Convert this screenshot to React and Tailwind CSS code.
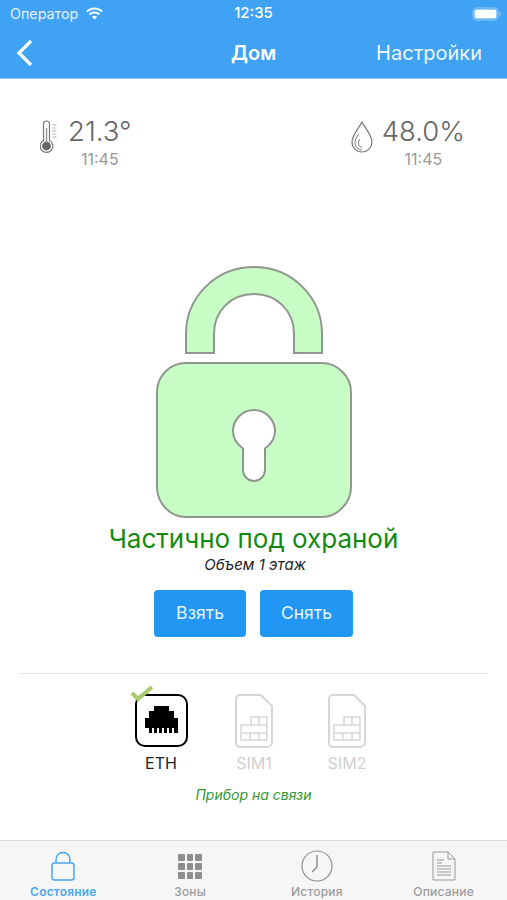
import React from "react";

function Wifi() {
  return (
    <svg width="19" height="14" viewBox="0 0 19 14" fill="#fff">
      <path d="M9.500 2.600c2.700 0 5.100 1 7 2.700l1.300-1.400C15.600 1.900 12.700.6 9.500.6S3.400 1.900 1.200 3.900l1.300 1.400c1.900-1.700 4.300-2.700 7-2.700z" />
      <path d="M9.500 6.600c1.600 0 3 .6 4.200 1.600l1.400-1.400C13.600 5.400 11.600 4.600 9.500 4.600s-4.100.8-5.600 2.200l1.400 1.400c1.200-1 2.600-1.600 4.200-1.600z" />
      <path d="M9.500 8.700c-1 0-1.900.4-2.600 1l2.600 2.800 2.600-2.800c-.7-.6-1.600-1-2.600-1z" />
    </svg>
  );
}

function Battery() {
  return (
    <svg width="30" height="14" viewBox="0 0 30 14">
      <rect x="1" y="1" width="25" height="12" rx="3.500" fill="none" stroke="#fff" strokeOpacity="0.45" />
      <rect x="2.500" y="2.500" width="22" height="9" rx="2" fill="#fff" />
      <path d="M27.500 5v4c.8-.3 1.300-1.100 1.300-2s-.5-1.700-1.300-2z" fill="#fff" fillOpacity="0.5" />
    </svg>
  );
}

function Thermo() {
  return (
    <svg width="18" height="33" viewBox="0 0 18 33" fill="none">
      <path d="M3.500 20.500V4a3 3 0 0 1 6 0v16.500a6.300 6.300 0 1 1-6 0z" stroke="#777" strokeWidth="1.200" fill="#fff" />
      <circle cx="6.500" cy="26" r="4.400" fill="#666" />
      <rect x="5.800" y="8" width="1.500" height="15" fill="#999" />
      <path d="M12.500 5h4M12.500 8h3M12.500 11h4M12.500 14h3M12.500 17h4" stroke="#aaa" strokeWidth="1" />
    </svg>
  );
}

function Drop() {
  return (
    <svg width="24" height="34" viewBox="0 0 24 34" fill="none" stroke="#777">
      <path d="M12 2c3 6 10 13 10 20a10 10 0 0 1-20 0C2 15 9 8 12 2z" strokeWidth="1.200" />
      <path d="M9 14c-2.500 3-4 5.500-4 8.500 0 4 3 7 7 7.500" strokeWidth="1" />
      <path d="M10 19c-1 1.300-1.700 2.500-1.700 4 0 2.300 1.700 4 3.700 4.500" strokeWidth="1" />
    </svg>
  );
}

function BigLock() {
  return (
    <svg width="196" height="252" viewBox="0 0 196 252" fill="#c8fdc5" stroke="#8f978f" strokeWidth="2">
      <path fillRule="evenodd" d="M30 87V68C30 31 60 1 98 1s68 30 68 67v19h-28V68c0-23-17-40-40-40S58 45 58 68v19z" />
      <path fillRule="evenodd" d="M30 97h136c15 0 29 13 29 29v95c0 16-14 30-29 30H30C14 251 1 237 1 221V126c0-16 13-29 29-29zM98 144c-11.500 0-21 9.500-21 21 0 7 3 12.500 10 17.500v21.500c0 6 5 11 11 11s11-5 11-11v-21.500c7-5 10-10.500 10-17.500 0-11.500-9.500-21-21-21z" />
    </svg>
  );
}

function EthIcon() {
  return (
    <div className="relative w-[53px] h-[53px] rounded-[10px] border-2 border-black flex items-center justify-center">
      <svg className="mb-[3px]" width="33" height="27" viewBox="0 0 33 27" fill="#000">
        <path d="M9 0h15v5h5v7h4v15h-4v-5h-2v5h-3v-5h-2v5h-3v-5h-2v5h-3v-5h-2v5H9v-5H7v5H4v-5H0V12h4V5h5z" />
      </svg>
      <svg className="absolute -top-[11px] -left-[7px]" width="24" height="18" viewBox="0 0 24 18" fill="none">
        <path d="M2 8l6 6L22 2" stroke="#aacb6b" strokeWidth="4" />
      </svg>
    </div>
  );
}

function SimIcon() {
  return (
    <svg width="38" height="54" viewBox="0 0 38 54" fill="none" stroke="#d6d6d6" strokeWidth="2">
      <path d="M5 1h21l11 11v36a5 5 0 0 1-5 5H5a4 4 0 0 1-4-4V5a4 4 0 0 1 4-4z" />
      <path d="M6 31h10v-8h16v23H6z" strokeWidth="1.500" />
      <path d="M6 39h26M16 31h16M24 23v8M15 39v7M24 39v7" strokeWidth="1.500" />
    </svg>
  );
}

function Tab({ icon, label, active }) {
  return (
    <div className="flex-1 flex flex-col items-center pt-[7px]">
      <div className="h-[36px] flex items-center justify-center">{icon}</div>
      <div className={`text-[12px] leading-[14px] mt-[1px] font-medium tracking-[0.2px] ${active ? "text-[#4ba6ef] font-semibold" : "text-[#9a9a9a]"}`}>
        {label}
      </div>
    </div>
  );
}

function Grid() {
  const cells = Array.from({ length: 9 });
  return (
    <div className="grid grid-cols-3 gap-[2px] w-[24px]">
      {cells.map((_, i) => (
        <div key={i} className="h-[7px] bg-[#8e8e8e] rounded-[1px]" />
      ))}
    </div>
  );
}

export default function App() {
  return (
    <div className="w-[507px] h-[900px] bg-white flex flex-col overflow-hidden" style={{ fontFamily: "Inter, 'Noto Sans', sans-serif" }}>
      <header className="h-[79px] bg-[#3fa2f3] text-white shrink-0 border-b border-[#8ccbf8]">
        <div className="h-[27px] px-[10px] flex items-center justify-between relative">
          <div className="flex items-center gap-[7px] text-[14.300px] text-[#e4f1fd] pt-[1px]">
            <span>Оператор</span>
            <Wifi />
          </div>
          <span className="absolute left-0 right-0 text-center text-[15px] font-medium">12:35</span>
          <div className="mr-[-5px]"><Battery /></div>
        </div>
        <div className="h-[51px] flex items-center justify-between pl-[16px] pr-[25px] relative">
          <svg width="18" height="28" viewBox="0 0 18 28" fill="none">
            <path d="M15 2L3 14l12 12" stroke="#fff" strokeWidth="3.200" />
          </svg>
          <span className="absolute left-0 right-0 text-center text-[20px] font-semibold">Дом</span>
          <span className="text-[20px] text-[#eef7fe]">Настройки</span>
        </div>
      </header>

      <main className="flex-1 flex flex-col items-center">
        <div className="w-full flex justify-between pl-[40px] pr-[42px] pt-[36px] text-[#666]">
          <div className="flex items-start gap-[10px]">
            <div className="pt-[5px]"><Thermo /></div>
            <div className="flex flex-col items-center">
              <span className="text-[27.500px] leading-[32px] font-light">21.3°</span>
              <span className="text-[16px] leading-[18px] mt-[3px] text-[#999]">11:45</span>
            </div>
          </div>
          <div className="flex items-start gap-[8px]">
            <div className="pt-[5px]"><Drop /></div>
            <div className="flex flex-col items-center">
              <span className="text-[27.500px] leading-[32px] font-light">48.0%</span>
              <span className="text-[16px] leading-[18px] mt-[3px] text-[#999]">11:45</span>
            </div>
          </div>
        </div>

        <div className="mt-[98px]"><BigLock /></div>

        <div className="text-[26px] leading-[32px] mt-[5px] text-[#128a12]">Частично под охраной</div>
        <div className="text-[15px] leading-[18px] mt-[1px] ml-[3px] italic text-[#222]">Объем 1 этаж</div>

        <div className="flex gap-[14px] mt-[16px]">
          <button className="w-[92px] h-[47px] rounded-[4px] bg-[#2296f3] text-[#e8f4fe] text-[17.500px]">Взять</button>
          <button className="w-[93px] h-[47px] rounded-[4px] bg-[#2296f3] text-[#e8f4fe] text-[17.500px]">Снять</button>
        </div>

        <div className="w-[468px] border-t border-[#e6e6e6] mt-[36px]" />

        <div className="flex gap-[40px] mt-[20px] w-full justify-center pl-[1px]">
          <div className="w-[53px] flex flex-col items-center">
            <EthIcon />
            <span className="text-[16px] leading-[18px] mt-[7px] text-[#222]">ETH</span>
          </div>
          <div className="w-[53px] flex flex-col items-center">
            <SimIcon />
            <span className="text-[16px] leading-[18px] mt-[6px] text-[#d0d0d0]">SIM1</span>
          </div>
          <div className="w-[53px] flex flex-col items-center">
            <SimIcon />
            <span className="text-[16px] leading-[18px] mt-[6px] text-[#d0d0d0]">SIM2</span>
          </div>
        </div>

        <div className="text-[14px] leading-[16px] italic text-[#2f9a2f] mt-[15px]">Прибор на связи</div>
      </main>

      <nav className="h-[60px] shrink-0 bg-[#f7f6f7] border-t border-[#dcdcdc] flex">
        <Tab
          active
          label="Состояние"
          icon={
            <svg width="24" height="30" viewBox="0 0 24 30" fill="none" stroke="#4ba6ef" strokeWidth="1.500">
              <path d="M5 12V8.500C5 4.500 8 1.500 12 1.500s7 3 7 7V12" />
              <rect x="1" y="12" width="22" height="17" rx="2.500" />
            </svg>
          }
        />
        <Tab label="Зоны" icon={<Grid />} />
        <Tab
          label="История"
          icon={
            <svg width="32" height="32" viewBox="0 0 32 32" fill="none" stroke="#8e8e8e">
              <circle cx="16" cy="16" r="15" strokeWidth="1.200" />
              <path d="M16 5v12l-5 5" strokeWidth="1.500" />
            </svg>
          }
        />
        <Tab
          label="Описание"
          icon={
            <svg width="24" height="30" viewBox="0 0 24 30" fill="none" stroke="#999" strokeWidth="1">
              <path d="M1 1h15l7 7v21H1z" />
              <path d="M16 1v7h7" />
              <path d="M5 9h7M5 12h5M5 15h14M5 18h14M5 21h14M5 24h14" />
            </svg>
          }
        />
      </nav>
    </div>
  );
}
